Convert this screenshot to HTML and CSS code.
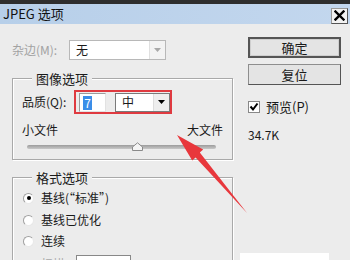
FILE: index.html
```html
<!DOCTYPE html>
<html>
<head>
<meta charset="utf-8">
<link rel="stylesheet" href="styles.css">
</head>
<body>
<div class="top"></div>
<div class="titlebar">
  <span class="title">JPEG 选项</span>
  <span class="close"><svg width="11" height="11" viewBox="0 0 11 11"><path d="M1.5 1.5 L9.5 9.5 M9.5 1.5 L1.5 9.5" stroke="#000" stroke-width="2.4" stroke-linecap="square"/></svg></span>
</div>
<div class="main">
  <div class="left">
    <div class="matte">
      <span class="matte-label">杂边(M):</span>
      <div class="select disabled"><span class="sel-text">无</span><span class="sel-arrow"><svg width="7" height="4" viewBox="0 0 7 4"><path d="M0 0 H7 L3.5 4 Z" fill="#a8a8a8"/></svg></span></div>
    </div>
    <div class="group g1">
      <span class="legend">图像选项</span>
      <div class="quality">
        <span class="q-label">品质(Q):</span>
        <div class="redbox">
          <div class="qinput"><span class="hl">7</span></div>
          <div class="select qsel"><span class="sel-text">中</span><span class="sel-arrow dark"><svg width="7" height="4" viewBox="0 0 7 4"><path d="M0 0 H7 L3.5 4 Z" fill="#000"/></svg></span></div>
        </div>
      </div>
      <div class="sizes"><span>小文件</span><span>大文件</span></div>
      <div class="slider">
        <div class="track"></div>
        <svg class="thumb" width="11" height="9" viewBox="0 0 11 9"><path d="M0.5 8.5 V5 L5.5 0.8 L10.5 5 V8.5 Z" fill="#f4f4f4" stroke="#8a8a8a"/></svg>
      </div>
    </div>
    <div class="group g2">
      <span class="legend">格式选项</span>
      <div class="radio r1"><span class="rb checked"></span><span>基线(“标准”)</span></div>
      <div class="radio r2"><span class="rb"></span><span>基线已优化</span></div>
      <div class="radio r3"><span class="rb"></span><span>连续</span></div>
      <div class="scan"><span class="scan-label">扫描:</span><div class="scan-box"></div></div>
    </div>
  </div>
  <div class="right">
    <div class="btn default">确定</div>
    <div class="btn">复位</div>
    <div class="check"><span class="cb"><svg width="10" height="10" viewBox="0 0 10 10"><path d="M1.5 4.5 L4 7.5 L8.5 1.5" fill="none" stroke="#000" stroke-width="2"/></svg></span><span>预览(P)</span></div>
    <div class="size">34.7K</div>
    <div class="whitebox"></div>
  </div>
</div>
<svg class="arrow" width="350" height="260" viewBox="0 0 350 260"><polygon points="177,135 203.2,149.4 199.8,152.5 247,213 195.6,157.4 192.2,160.5" fill="#e8373c"/></svg>
</body>
</html>
```
FILE: styles.css
```css
* { box-sizing: border-box; }
html, body { margin: 0; padding: 0; }
body {
  width: 350px;
  height: 260px;
  overflow: hidden;
  position: relative;
  background: #ececec;
  font-family: "Noto Sans CJK SC", "Microsoft YaHei", sans-serif;
  font-size: 12px;
  color: #1a1a1a;
  line-height: 14px;
}
.top { height: 4px; background: #2e2e2e; }
.titlebar {
  height: 20px;
  background: linear-gradient(to right, #b7cfe9, #c3d7ee);
  display: flex;
  align-items: center;
  justify-content: space-between;
  padding: 0 2px 0 3px;
}
.title { font-size: 13px; color: #111; }
.close {
  width: 17px;
  height: 16px;
  margin-top: 3px;
  background: #f2f2f2;
  border: 1px solid #9a9a9a;
  border-right-color: #555;
  border-bottom-color: #555;
  display: flex;
  align-items: center;
  justify-content: center;
}
.main { display: flex; padding-left: 12px; }
.left { width: 221px; }
.matte { display: flex; align-items: center; margin-top: 16px; height: 20px; }
.matte-label { width: 57px; color: #a2a2a2; }
.select {
  display: flex;
  align-items: stretch;
  background: #fff;
  border: 1px solid #b8b8b8;
}
.select.disabled { width: 97px; height: 20px; }
.sel-text { flex: 1; padding-left: 6px; display: flex; align-items: center; }
.sel-arrow {
  width: 16px;
  display: flex;
  align-items: center;
  justify-content: center;
  background: #f3f3f3;
  border-left: 1px solid #e0e0e0;
}
.sel-arrow.dark { background: #eee; border-left: 1px solid #ddd; }
.group {
  position: relative;
  border: 1px solid #a9a9a9;
  box-shadow: inset 1px 1px 0 #fff, 1px 1px 0 #fff;
}
.g1 { margin-top: 18px; height: 82px; padding: 11px 0 0 9px; }
.g2 { margin-top: 17px; height: 100px; padding: 12px 0 0 10px; }
.legend {
  position: absolute;
  top: -8px;
  left: 19px;
  padding: 0 4px;
  background: #ececec;
  font-size: 13px;
  line-height: 15px;
}
.quality { display: flex; align-items: center; height: 24px; }
.q-label { width: 52px; }
.redbox {
  width: 98px;
  height: 24px;
  border: 2px solid #df3a40;
  display: flex;
  align-items: center;
  padding-left: 3px;
}
.qinput {
  width: 27px;
  height: 19px;
  background: #fff;
  border: 1px solid #9c9c9c;
  border-right-color: #e2e2e2;
  border-bottom-color: #e2e2e2;
  padding: 2px 0 0 3px;
}
.hl { display: inline-block; background: #3b8ee8; color: #fff; width: 9px; height: 14px; line-height: 14px; text-align: center; }
.qsel { margin-left: 9px; width: 55px; height: 19px; border-color: #7a7a7a; }
.sizes { display: flex; justify-content: space-between; width: 201px; margin-top: 9px; height: 14px; }
.slider { position: relative; margin: 5px 0 0 5px; width: 190px; height: 10px; }
.track {
  position: absolute;
  top: 3px;
  left: 0;
  width: 189px;
  height: 4px;
  border-radius: 2px;
  background: linear-gradient(#9c9c9c, #c8c8c8);
}
.thumb { position: absolute; left: 105px; top: 0; }
.radio { display: flex; align-items: center; height: 14px; }
.r1 { margin-top: 1px; }
.r2 { margin-top: 8px; }
.r3 { margin-top: 7px; }
.rb {
  width: 11px;
  height: 11px;
  border-radius: 50%;
  background: #fff;
  border: 1px solid #a0a0a0;
  border-right-color: #e8e8e8;
  border-bottom-color: #e8e8e8;
  margin-right: 7px;
  display: flex;
  align-items: center;
  justify-content: center;
}
.rb.checked::after { content: ""; width: 4px; height: 4px; border-radius: 50%; background: #000; }
.scan { display: flex; align-items: flex-start; margin-top: 7px; padding-left: 18px; }
.scan-label { color: #a8a8a8; width: 35px; padding-top: 2px; }
.scan-box { width: 55px; height: 20px; border: 1px solid #888; background: #fff; }
.right { margin-left: 15px; width: 93px; display: flex; flex-direction: column; }
.btn {
  height: 21px;
  border: 1px solid #adadad;
  background: #e4e4e4;
  display: flex;
  align-items: center;
  justify-content: center;
  font-size: 13px;
}
.btn.default { margin-top: 13px; border: 2px solid #555; box-shadow: inset 0 0 0 1px #cfcfcf; }
.btn + .btn { margin-top: 6px; border-color: #8e8e8e; border-right-color: #555; border-bottom-color: #555; }
.check { display: flex; align-items: center; margin-top: 15px; height: 14px; font-size: 13px; }
.cb {
  width: 12px;
  height: 12px;
  background: #fff;
  border: 1px solid #888;
  margin-right: 6px;
  display: flex;
  align-items: center;
  justify-content: center;
}
.size { margin-top: 14px; height: 14px; }
.whitebox { margin: 111px 0 0 -8px; width: 89px; height: 10px; background: #fff; }
.arrow { position: absolute; left: 0; top: 0; pointer-events: none; }
```
